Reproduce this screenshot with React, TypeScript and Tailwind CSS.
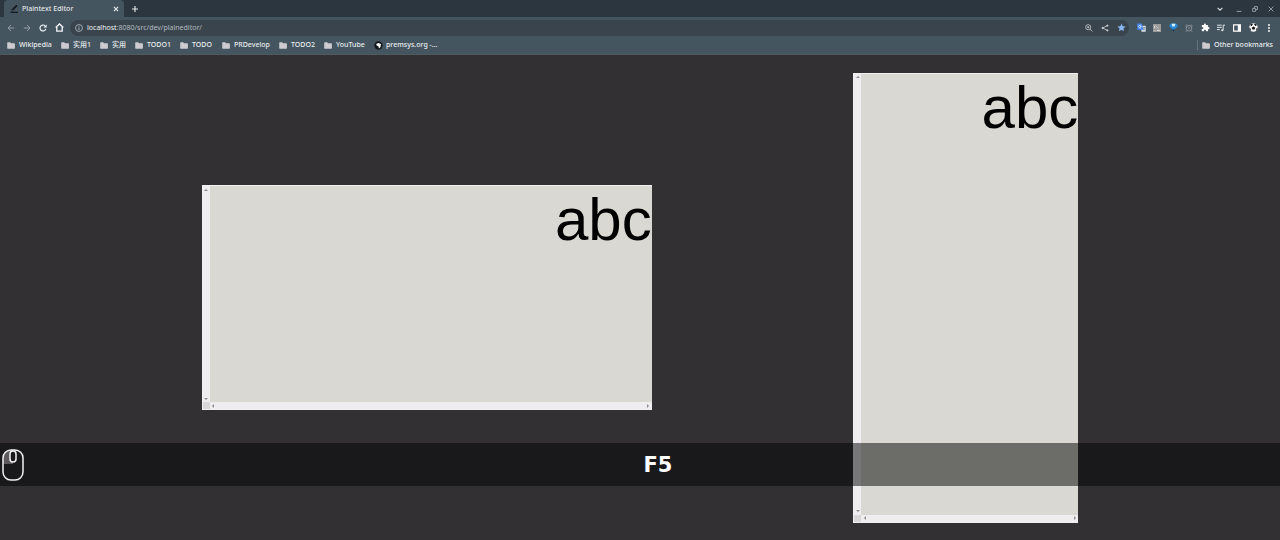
import type { ReactNode } from "react";

const iconButton = "flex h-4 w-4 shrink-0 items-center justify-center";

function IconButton({ label, children }: { label: string; children: ReactNode }) {
  return (
    <button type="button" aria-label={label} className={iconButton}>
      {children}
    </button>
  );
}

function Stroke({ d, className, width = 1.2 }: { d: string; className: string; width?: number }) {
  return (
    <svg viewBox="0 0 10 10" className={className} fill="none" stroke="currentColor" strokeWidth={width} aria-hidden="true">
      <path d={d} />
    </svg>
  );
}

function Folder() {
  return (
    <svg viewBox="0 0 8 7" className="h-[7px] w-2 shrink-0 text-[#cdcbd0]" fill="currentColor" aria-hidden="true">
      <path d="M.8.3h2.4l.8 1h3.2q.7 0 .7.7v4q0 .7-.7.7H.8Q.2 6.700.2 6V1Q.2.3.8.3z" />
    </svg>
  );
}

function Globe() {
  return (
    <svg viewBox="0 0 10 10" className="-mr-px h-[9px] w-[9px] shrink-0" aria-hidden="true">
      <circle cx="5" cy="5" r="4.600" fill="#14181c" />
      <path d="M2.400 3.300 4.800 2.200 7.700 3.300 7.300 6.700 5.500 8.300 4.900 5.700 3.200 5.200z" fill="#fff" />
    </svg>
  );
}

const bookmarks = [
  { name: "Wikipedia", width: "w-[54px]" },
  { name: "实用1", width: "w-[39px]" },
  { name: "实用", width: "w-[35px]" },
  { name: "TODO1", width: "w-[45px]" },
  { name: "TODO", width: "w-[42px]" },
  { name: "PRDevelop", width: "w-[57px]" },
  { name: "TODO2", width: "w-[45px]" },
  { name: "YouTube", width: "w-[50px]" },
];

function TabStrip() {
  return (
    <div className="flex h-[17px] items-end justify-between bg-[#2b363e]">
      <div className="flex h-full items-center">
        <div className="ml-1 flex h-full w-[120px] items-center rounded-t-[4px] bg-[#455560] pr-1 pl-1.5">
          <svg viewBox="0 0 9 9" className="mr-[3px] h-[9px] w-[9px]" aria-hidden="true">
            <path d="M.5 8.300h7.500" stroke="#11161a" strokeWidth="1.200" />
            <path d="M1.500 6.800 2 5.100 6.300.8 7.500 2 3.200 6.300z" fill="#11161a" />
          </svg>
          <span className="flex-1 text-[7px] font-medium text-[#e2e6e8]">Plaintext Editor</span>
          <button type="button" aria-label="Close tab" className="flex h-2 w-2 items-center justify-center text-[#e6eaec]">
            <Stroke d="M1.500 1.500l7 7M8.500 1.500l-7 7" className="h-1.5 w-1.5" width={1.9} />
          </button>
        </div>
        <button type="button" aria-label="New tab" className="ml-[7px] flex h-2 w-2 items-center justify-center text-[#e6eaec]">
          <Stroke d="M5 0v10M0 5h10" className="h-1.5 w-1.5" width={1.9} />
        </button>
      </div>
      <div className="flex h-full items-center pr-px text-[#929da4]">
        <button type="button" aria-label="Search tabs" className={iconButton + " mr-[3px] text-[#dbe0e3]"}>
          <Stroke d="M1 3l4 4 4-4" className="h-1.5 w-1.5" width={1.8} />
        </button>
        <IconButton label="Minimize">
          <Stroke d="M1 9h8" className="h-1.5 w-1.5" width={1.7} />
        </IconButton>
        <IconButton label="Restore">
          <Stroke d="M1 4h5v5H1zM4 4V1h5v5H6" className="h-1.5 w-1.5" width={1.6} />
        </IconButton>
        <IconButton label="Close window">
          <Stroke d="M1 1l8 8M9 1L1 9" className="h-1.5 w-1.5" width={1.6} />
        </IconButton>
      </div>
    </div>
  );
}

function Toolbar() {
  return (
    <div className="flex h-[21px] items-center bg-[#455560] pr-[3px] pl-[3px] text-[#f1f3f4]">
      <button type="button" aria-label="Back" className={iconButton + " text-[#94a0a7]"}>
        <Stroke d="M9 5H1.500M5 1.200 1.200 5 5 8.800" className="h-2 w-2" />
      </button>
      <button type="button" aria-label="Forward" className={iconButton + " text-[#94a0a7]"}>
        <Stroke d="M1 5h7.500M5 1.200 8.800 5 5 8.800" className="h-2 w-2" />
      </button>
      <IconButton label="Reload">
        <svg viewBox="0 0 10 10" className="h-2 w-2" fill="none" stroke="currentColor" strokeWidth="1.500" aria-hidden="true">
          <path d="M8.500 6A3.700 3.700 0 1 1 7.600 2.400" />
          <path d="M9.500.5v4h-4z" fill="currentColor" stroke="none" />
        </svg>
      </IconButton>
      <IconButton label="Home">
        <Stroke d="M.8 5 5 1l4.200 4M2 4v5h6V4" className="h-[9px] w-[9px]" width={1.5} />
      </IconButton>
      <div className="ml-[3px] flex h-4 flex-1 items-center rounded-full bg-[#39444c] pl-[5px]">
        <svg viewBox="0 0 10 10" className="mr-1 h-2 w-2" fill="none" stroke="#b8c0c5" aria-hidden="true">
          <circle cx="5" cy="5" r="4.300" />
          <path d="M5 4.300v3M5 2.300v1" strokeWidth="1.200" />
        </svg>
        <span className="relative flex-1 text-[7px]">
          <span aria-hidden="true" className="text-[#b3bbc0]">
            <span className="text-[#f1f3f4]">localhost</span>:8080/src/dev/plaineditor/
          </span>
          <input
            aria-label="Address"
            defaultValue="localhost:8080/src/dev/plaineditor/"
            className="absolute inset-0 w-full bg-transparent text-transparent outline-none"
          />
        </span>
        <IconButton label="Zoom">
          <svg viewBox="0 0 10 10" className="h-2 w-2" fill="none" stroke="#c6cdd1" aria-hidden="true">
            <circle cx="4" cy="4" r="3.200" />
            <path d="M6.300 6.300 9.300 9.300M2.500 4h3M4 2.500v3" />
          </svg>
        </IconButton>
        <IconButton label="Share">
          <svg viewBox="0 0 10 10" className="h-2 w-2" fill="#d3d8db" stroke="#d3d8db" aria-hidden="true">
            <path d="M8 2 2 5l6 3" fill="none" />
            <circle cx="8" cy="2" r=".8" />
            <circle cx="2" cy="5" r=".8" />
            <circle cx="8" cy="8" r=".8" />
          </svg>
        </IconButton>
        <IconButton label="Edit bookmark">
          <svg viewBox="0 0 10 10" className="h-[9px] w-[9px]" fill="#8ab8f5" aria-hidden="true">
            <path d="M5 .5 6.300 3.600 9.600 3.900 7.100 6 7.900 9.300 5 7.500 2.100 9.300 2.900 6 .4 3.900 3.700 3.600z" />
          </svg>
        </IconButton>
      </div>
      <div className="ml-1 flex">
        <IconButton label="Translate">
          <svg viewBox="0 0 10 10" className="h-[9px] w-[9px]" aria-hidden="true">
            <path d="M4 3h5.700v6.700H5z" fill="#d8dde4" />
            <path d="M.3.500h5l1.700 7H.3z" fill="#4285f4" />
            <path d="M4.700 3.300A1.500 1.500 0 1 0 4.700 4.700V4H3.500" fill="none" stroke="#fff" strokeWidth=".8" />
            <path d="M6.500 5h2.500M7.700 4.300v.7M8.500 5Q8 7 6.500 7.800M7 6l1.800 2" fill="none" stroke="#627487" strokeWidth=".6" />
          </svg>
        </IconButton>
        <IconButton label="Capture extension">
          <svg viewBox="0 0 10 10" className="h-2 w-2" aria-hidden="true">
            <path d="M0 0h10v10H0z" fill="#9b9a9b" />
            <path d="M2 2v3.500M5 8h4M2 8h1" fill="none" stroke="#e9e9e9" />
            <path d="M3.500 2.500 7 5.500" stroke="#dcdcdc" />
          </svg>
        </IconButton>
        <IconButton label="Gem extension">
          <svg viewBox="0 0 10 10" className="h-[9px] w-[9px]" aria-hidden="true">
            <path d="M.5 2 2.500.5h5L9.500 2v2L5.500 8h-1L.5 4z" fill="#2789d4" />
            <path d="M2.800.7h4.400L6.200 3.800H3.800z" fill="#d9f1ff" />
            <path d="M3.700 7h2.600L5 10z" fill="#123955" />
          </svg>
        </IconButton>
        <IconButton label="Alarm extension">
          <svg viewBox="0 0 10 10" className="h-2 w-2" fill="none" stroke="#969a9d" strokeWidth="1.100" aria-hidden="true">
            <circle cx="5" cy="5.300" r="3.500" />
            <path d="M.5 2.700 2.700.7M9.500 2.700 7.300.7M2.300 8.200 1.200 9.700M7.700 8.200l1.100 1.500M3.500 4.500 5 5.500l1.500-1" />
          </svg>
        </IconButton>
        <IconButton label="Extensions">
          <svg viewBox="0 0 24 24" className="h-[9px] w-[9px]" fill="#fff" aria-hidden="true">
            <path d="M20.500 11H19V7a2 2 0 0 0-2-2h-4V3.500a2.500 2.500 0 0 0-5 0V5H4a2 2 0 0 0-2 2v3.800h1.500a2.700 2.700 0 0 1 0 5.400H2V20a2 2 0 0 0 2 2h3.800v-1.500a2.700 2.700 0 0 1 5.400 0V22H17a2 2 0 0 0 2-2v-4h1.500a2.500 2.500 0 0 0 0-5z" />
          </svg>
        </IconButton>
        <IconButton label="Media controls">
          <svg viewBox="0 0 10 10" className="h-2 w-2" fill="none" stroke="#e4e8ea" strokeWidth="1.200" aria-hidden="true">
            <path d="M0 1.500h6M0 4.200h6M0 7h3.500M7.700 8V1.500H10" />
            <circle cx="6.500" cy="7.800" r="1.300" fill="#e4e8ea" stroke="none" />
          </svg>
        </IconButton>
        <IconButton label="Side panel">
          <svg viewBox="0 0 10 10" className="h-2 w-2" aria-hidden="true">
            <path d="M.7 1h8.600v8H.7z" fill="none" stroke="#fff" strokeWidth="1.500" />
            <path d="M6 1h3.500v8H6z" fill="#fff" />
          </svg>
        </IconButton>
        <IconButton label="Profile">
          <svg viewBox="0 0 10 10" className="h-[9px] w-[9px]" aria-hidden="true">
            <circle cx="5" cy="5" r="4.800" fill="#f5f5f5" />
            <path d="M5 4 6.900 5.200 6.200 7.300H3.800L3.100 5.200zM1.200 2 3.500.5 4.300 1.800 2.500 3.700zM8.800 2 6.500.5 5.700 1.800 7.500 3.700zM.2 5 1.600 5.800 2.300 8.500 1 7.700zM9.800 5 8.400 5.800 7.700 8.500 9 7.700z" fill="#101214" />
          </svg>
        </IconButton>
        <IconButton label="Menu">
          <svg viewBox="0 0 10 10" className="h-2 w-2" fill="#fff" aria-hidden="true">
            <circle cx="5" cy="1.300" r="1.200" />
            <circle cx="5" cy="5" r="1.200" />
            <circle cx="5" cy="8.700" r="1.200" />
          </svg>
        </IconButton>
      </div>
    </div>
  );
}

function BookmarksBar() {
  return (
    <nav aria-label="Bookmarks" className="flex h-[17px] items-center justify-between border-b border-[#505a61] bg-[#455560] pb-0.5 pr-[7px] pl-[7px] text-[7px] font-medium text-[#e8ecee]">
      <div className="flex items-center">
        {bookmarks.map((b) => (
          <button key={b.name} type="button" className={"flex shrink-0 items-center gap-1 whitespace-nowrap " + b.width}>
            <Folder />
            <span>{b.name}</span>
          </button>
        ))}
        <a href="#premsys" className="flex items-center gap-1 whitespace-nowrap">
          <Globe />
          <span>premsys.org -…</span>
        </a>
      </div>
      <button type="button" className="flex items-center gap-1 border-l border-[#66737c] pl-1 whitespace-nowrap">
        <Folder />
        <span>Other bookmarks</span>
      </button>
    </nav>
  );
}

function Arrow({ label, d }: { label: string; d: string }) {
  return (
    <button type="button" aria-label={label} className="flex h-[7px] w-[7px] items-center justify-center">
      <svg viewBox="0 0 4 4" className="h-1 w-1" fill="#8c8a8e" aria-hidden="true">
        <path d={d} />
      </svg>
    </button>
  );
}

function Editor({ label, size }: { label: string; size: string }) {
  return (
    <section className={"grid grid-cols-[7px_1fr] grid-rows-[1fr_7px] border-y border-l border-[#f1f0f1] bg-[#d9d8d2] " + size}>
      <div className="flex flex-col justify-between bg-[#efedf0]">
        <Arrow label="Scroll up" d="M0 3 2 1l2 2z" />
        <Arrow label="Scroll down" d="M0 1h4L2 3z" />
      </div>
      <textarea
        aria-label={label}
        defaultValue="abc"
        spellCheck={false}
        className="block h-full w-full resize-none overflow-hidden bg-transparent text-right font-['Liberation_Sans',Arial,sans-serif] text-[60px] leading-[68px] text-black outline-none"
      />
      <div className="bg-[#d9d8d9]" />
      <div className="flex justify-between bg-[#efedf0]">
        <Arrow label="Scroll left" d="M3 0v4L1 2z" />
        <Arrow label="Scroll right" d="M1 0v4l2-2z" />
      </div>
    </section>
  );
}

function KeyOverlay() {
  return (
    <div className="pointer-events-none absolute inset-x-0 bottom-[54px] flex h-[43px] items-center bg-black/50 pl-0.5 font-['DejaVu_Sans',sans-serif] text-[21px] leading-6 font-bold text-white">
      <svg viewBox="0 0 22 32" className="mr-3 h-8 w-[22px]" aria-hidden="true">
        <path d="M1 15V11Q1 1 11 1v14z" fill="#5c5a5d" />
        <rect x="1" y="1" width="20" height="30" rx="8" fill="none" stroke="#f2f2f2" strokeWidth="1.500" />
        <rect x="8" y="2" width="6" height="11" rx="3" fill="#1a181b" stroke="#f2f2f2" strokeWidth="1.500" />
      </svg>
      <span className="flex-1 text-center">F5</span>
    </div>
  );
}

export default function App() {
  return (
    <div className="relative flex min-h-screen flex-col bg-[#333034] font-['Noto_Sans','Noto_Sans_CJK_SC',sans-serif]">
      <header className="leading-[10px]">
        <TabStrip />
        <Toolbar />
        <BookmarksBar />
      </header>
      <main className="flex flex-1 items-center justify-evenly">
        <Editor label="Horizontal editor" size="h-[225px] w-[450px]" />
        <Editor label="Vertical editor" size="h-[450px] w-[225px]" />
      </main>
      <KeyOverlay />
    </div>
  );
}
